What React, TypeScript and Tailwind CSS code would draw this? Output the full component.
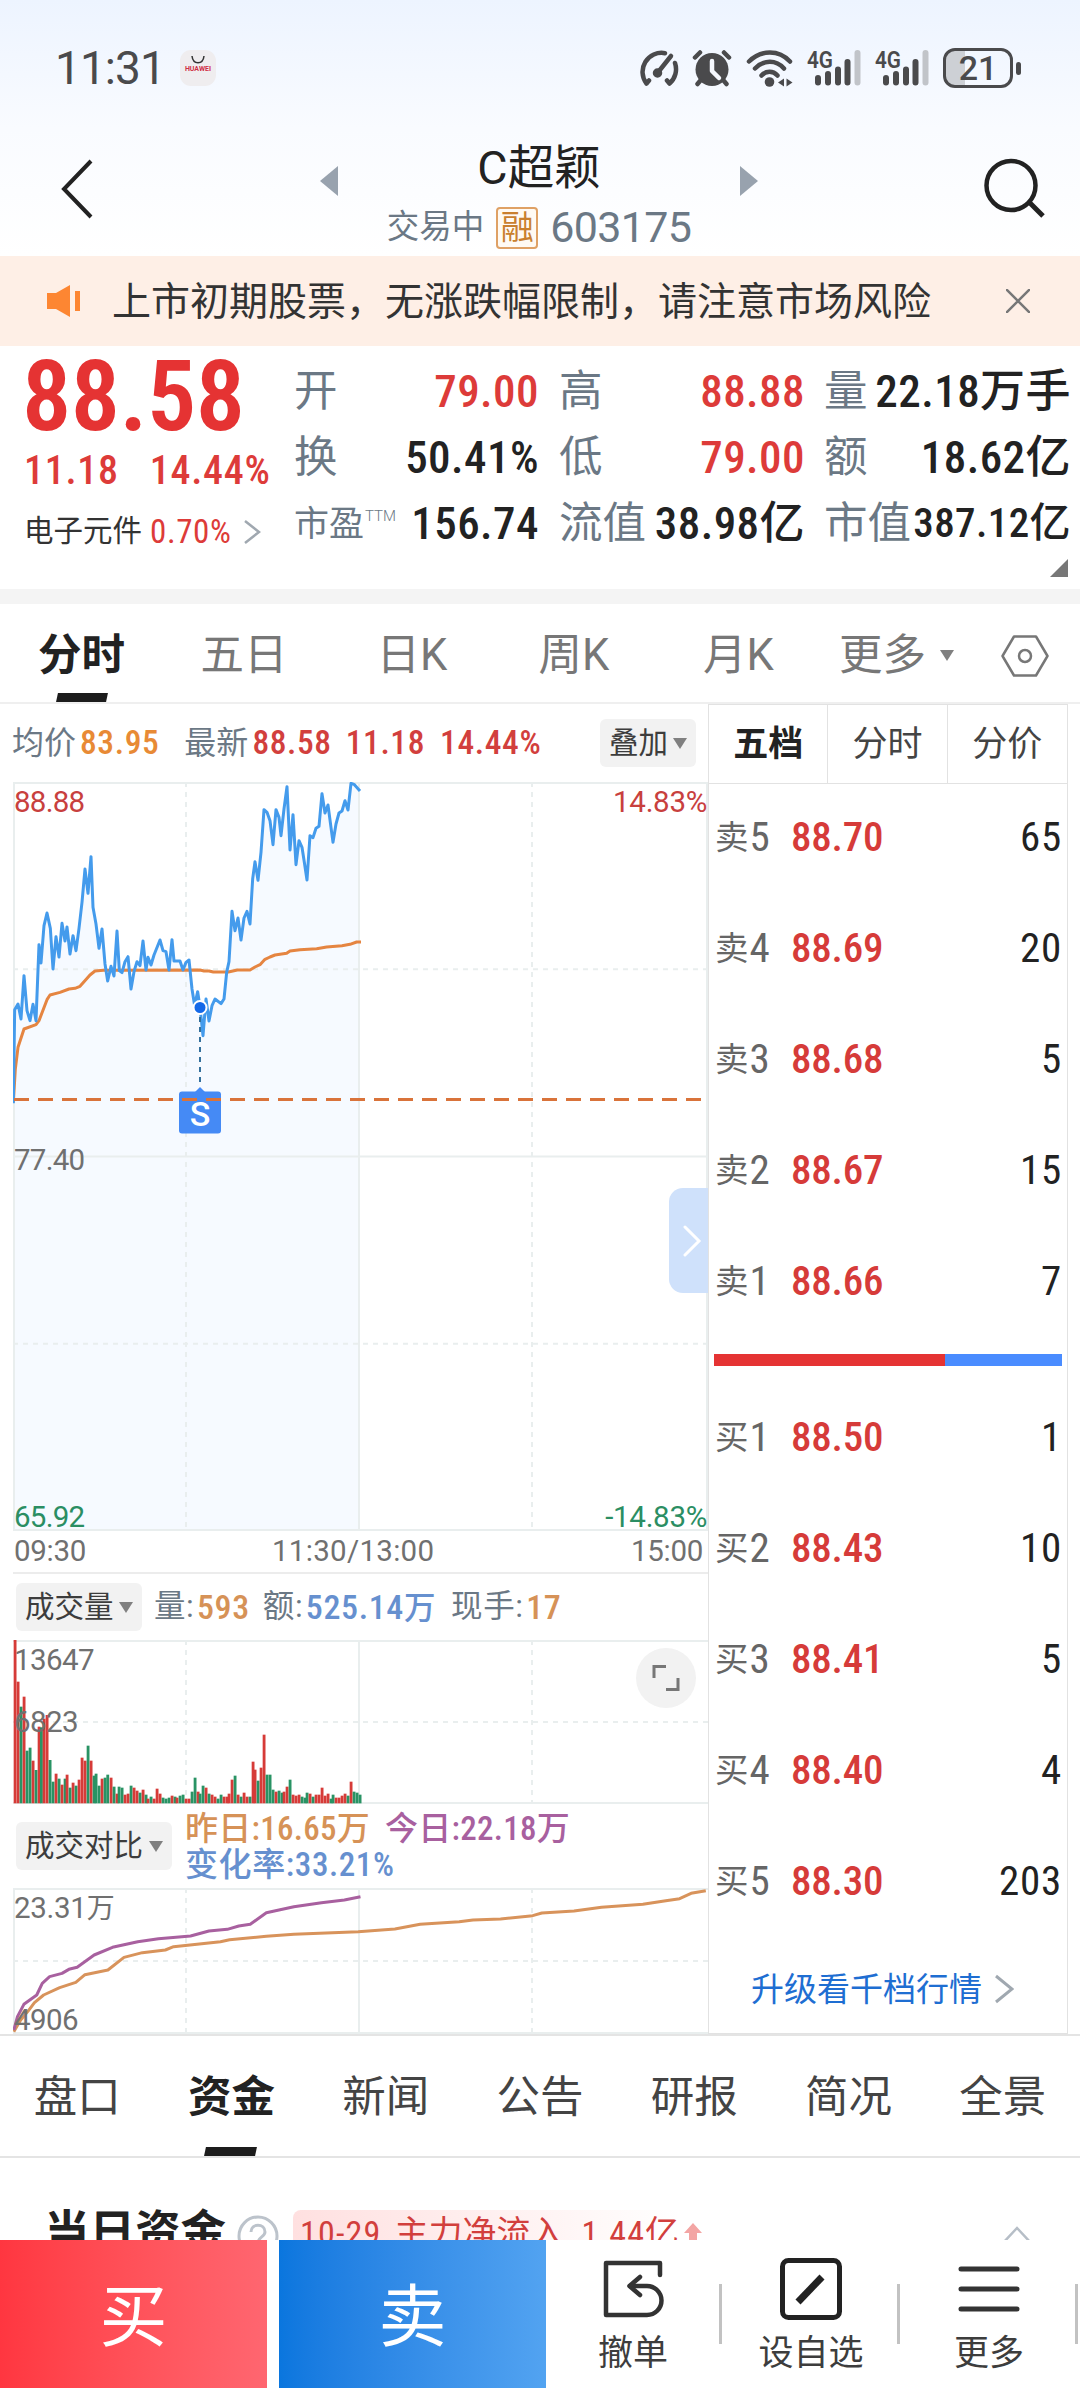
import { type ReactNode } from "react";
import clsx from "clsx";

const QUOTE_COLUMNS = [
  {
    className: "w-[245px] ml-[294px]",
    rows: [
      { label: "开", value: "79.00", up: true },
      { label: "换", value: "50.41%" },
      { label: "市盈", value: "156.74", sup: "TTM" },
    ],
  },
  {
    className: "w-[246px] ml-[20px]",
    rows: [
      { label: "高", value: "88.88", up: true },
      { label: "低", value: "79.00", up: true },
      { label: "流值", value: "38.98亿" },
    ],
  },
  {
    className: "w-[247px] ml-[19px]",
    rows: [
      { label: "量", value: "22.18万手" },
      { label: "额", value: "18.62亿" },
      { label: "市值", value: "387.12亿", small: true },
    ],
  },
];

const SELLS = [
  ["卖5", "88.70", "65"],
  ["卖4", "88.69", "20"],
  ["卖3", "88.68", "5"],
  ["卖2", "88.67", "15"],
  ["卖1", "88.66", "7"],
];

const BUYS = [
  ["买1", "88.50", "1"],
  ["买2", "88.43", "10"],
  ["买3", "88.41", "5"],
  ["买4", "88.40", "4"],
  ["买5", "88.30", "203"],
];

const SECTION_TABS = ["盘口", "资金", "新闻", "公告", "研报", "简况", "全景"];

const PRICE_LINE =
  "40,1003 44,722 54,705 63,750 72,620 81,725 90,755 99,706 108,755 117,527 123,582 132,470 141,432 151,478 159,600 168,503 177,564 186,463 195,516 201,474 210,555 219,500 228,545 237,478 246,400 255,300 264,373 273,263 279,415 288,465 297,538 306,480 315,585 323,636 333,592 342,621 351,486 358,605 366,611 375,578 384,563 393,660 402,608 411,578 420,590 429,516 438,603 444,565 453,588 462,558 480,513 489,545 498,548 507,603 516,512 522,576 540,576 549,603 558,580 567,573 576,660 584,710 593,668 600,714 609,800 618,690 627,756 636,710 645,690 663,704 672,690 680,610 687,578 696,427 705,485 714,447 723,513 732,447 741,427 750,465 758,330 765,278 774,334 783,250 792,122 801,130 810,155 819,227 828,122 837,145 843,200 852,120 861,53 870,243 879,137 888,287 897,215 906,235 913,280 921,333 930,200 939,206 948,178 957,172 966,74 975,132 984,108 999,220 1008,165 1017,132 1026,126 1035,95 1044,123 1053,43 1062,46 1080,66";

const AVG_LINE =
  "40,1000 46,900 54,835 72,780 108,767 117,755 141,692 150,678 180,670 207,660 225,658 240,652 270,618 285,606 310,604 600,603 612,606 627,606 640,609 685,609 712,603 750,603 765,594 780,587 795,571 810,564 825,558 860,553 870,546 900,542 950,539 980,534 1026,530 1050,526 1070,519 1083,519";

const TODAY_LINE =
  "30,1380 38,1340 52,1303 80,1275 92,1240 108,1220 135,1210 150,1198 168,1192 205,1155 245,1132 300,1115 345,1106 415,1098 455,1083 495,1078 520,1068 545,1063 580,1028 640,1010 700,998 750,990 785,980";

const YESTERDAY_LINE =
  "30,1385 45,1350 62,1322 75,1298 95,1275 130,1253 165,1237 185,1214 235,1200 270,1162 310,1148 360,1140 378,1130 480,1115 500,1109 580,1099 640,1093 780,1085 860,1077 915,1063 1000,1055 1030,1050 1090,1047 1160,1037 1180,1029 1250,1023 1310,1012 1400,1003 1450,992 1480,986 1505,970 1537,962";

// [x, top, up]
const VOLUME: [number, number, 0 | 1][] = [
  [45, 60, 1], [54, 185, 1], [63, 260, 0], [72, 230, 1], [81, 392, 0], [90, 383, 0], [99, 422, 1], [108, 450, 0],
  [117, 320, 1], [124, 322, 0], [132, 296, 1], [141, 285, 1], [150, 420, 0], [159, 485, 0], [168, 461, 1], [177, 476, 0],
  [186, 494, 1], [195, 476, 0], [201, 464, 1], [210, 503, 0], [219, 488, 1], [228, 497, 0], [237, 479, 1], [246, 413, 1],
  [255, 422, 1], [264, 377, 0], [273, 422, 1], [282, 467, 0], [288, 461, 0], [297, 497, 0], [306, 476, 1], [315, 473, 0],
  [323, 464, 0], [333, 473, 1], [342, 500, 0], [351, 521, 1], [357, 500, 0], [366, 503, 0], [375, 524, 1], [384, 521, 1],
  [393, 497, 0], [402, 503, 1], [411, 512, 1], [420, 518, 0], [429, 509, 1], [438, 524, 0], [444, 536, 1], [453, 530, 0],
  [462, 536, 1], [471, 506, 1], [480, 521, 1], [489, 533, 0], [498, 536, 0], [507, 533, 0], [516, 527, 1], [525, 530, 0],
  [531, 533, 1], [540, 527, 0], [549, 524, 0], [558, 536, 1], [567, 536, 1], [576, 515, 0], [585, 473, 0], [594, 515, 1],
  [600, 521, 0], [609, 497, 0], [618, 503, 1], [627, 521, 0], [636, 524, 1], [645, 530, 1], [654, 536, 0], [663, 524, 0],
  [672, 530, 1], [681, 530, 1], [687, 521, 1], [696, 479, 1], [705, 467, 0], [714, 524, 1], [723, 530, 0], [732, 518, 1],
  [741, 530, 1], [750, 530, 0], [759, 425, 1], [765, 449, 1], [774, 482, 0], [783, 443, 1], [792, 344, 1], [801, 464, 0],
  [810, 464, 0], [819, 509, 0], [828, 515, 1], [837, 512, 0], [846, 518, 0], [852, 515, 1], [861, 500, 1], [870, 479, 0],
  [879, 524, 1], [888, 527, 1], [897, 524, 1], [906, 530, 0], [915, 533, 0], [921, 518, 0], [930, 521, 1], [939, 530, 0],
  [948, 524, 1], [957, 524, 1], [966, 503, 1], [975, 527, 1], [984, 521, 1], [993, 536, 0], [999, 524, 0], [1008, 533, 1],
  [1017, 533, 1], [1026, 527, 1], [1035, 521, 1], [1044, 527, 0], [1053, 485, 1], [1062, 515, 0], [1071, 518, 0], [1080, 524, 0],
];

function Num({ className, tracking = "tracking-[0.018em]", children }: { className?: string; tracking?: string; children: ReactNode }) {
  return (
    <span className={clsx("font-['Roboto_Condensed','Roboto','Noto_Sans_CJK_SC',sans-serif]", tracking, className)}>
      {children}
    </span>
  );
}

function Caret({ className }: { className?: string }) {
  return (
    <svg width="14" height="11" viewBox="0 0 14 11" className={className}>
      <path d="M0 0h14L7 11z" fill="#808080" />
    </svg>
  );
}

function Signal() {
  return (
    <svg width="54" height="38" viewBox="0 0 54 38" className="overflow-visible">
      <text x="0" y="18.500" fontSize="24" fontWeight="600" fill="#4a4a4c" textLength="26" lengthAdjust="spacingAndGlyphs">4G</text>
      <g stroke="#4a4a4c" strokeWidth="6" strokeLinecap="round">
        <path d="M11 29v4.500M21 25v8.500M31 20.500v13M40.500 13v20.500" />
        <path d="M50.500 4v29.500" stroke="#c1c4c9" />
      </g>
    </svg>
  );
}

function StatusBar() {
  return (
    <div className="flex h-[136px] items-center pl-[55px] pr-[59px] text-[#4a4a4c]">
      <span className="text-[46px] tracking-[-0.02em]">11:31</span>
      <div className="ml-[15px] flex size-9 flex-col items-center rounded-[11px] bg-[#efedef] pt-[6px]">
        <svg width="14" height="8" viewBox="0 0 14 8" fill="none" stroke="#333" strokeWidth="1.500">
          <path d="M1 0c1 9 11 9 12 0" />
        </svg>
        <span className="mt-[2px] text-[7px] font-bold text-[#cf2f45]">HUAWEI</span>
      </div>
      <div className="ml-auto flex items-center">
        <svg width="42" height="38" viewBox="0 0 42 38" fill="none" stroke="#4a4a4c" strokeWidth="4.500" strokeLinecap="round" strokeLinejoin="round">
          <path d="M28 4.200A19 19 0 0 0 9.500 34.500l2.500-3M38 14a19 19 0 0 1-5.500 20.500l-2.500-3" />
          <path d="M20.500 24 34 7" />
          <circle cx="20.500" cy="24" r="2.500" fill="#4a4a4c" />
        </svg>
        <svg width="40" height="38" viewBox="0 0 40 38" className="ml-[13px]" fill="none" stroke="#4a4a4c" strokeWidth="4.500" strokeLinecap="round">
          <circle cx="20" cy="20.500" r="16.500" fill="#4a4a4c" stroke="none" />
          <path d="M3 8.500 8 3.500M32 3.500l5 5M8 32l-2.500 3M32 32l2.500 3" />
          <path d="M20 12v10l7 7" stroke="#f5f8fe" strokeWidth="4.500" strokeLinejoin="round" />
        </svg>
        <svg width="47" height="38" viewBox="0 0 47 38" className="ml-[14px]" fill="none" stroke="#4a4a4c" strokeWidth="4.500" strokeLinecap="round">
          <path d="M3 12.500c12-12 30-12 41 0M9 19.500c9-9 21-9 29 0M15.500 26.500c4.500-5 11.500-5 16 0" />
          <circle cx="23.500" cy="33" r="4.800" fill="#4a4a4c" stroke="none" />
          <path d="M32 33.500l6-4v8zM40.500 37.500v-8l6 4z" fill="#4a4a4c" stroke="none" />
        </svg>
        <div className="ml-[14px] flex gap-[14px]">
          <Signal />
          <Signal />
        </div>
        <div className="ml-[14px] flex h-10 w-[70px] items-center justify-center rounded-[12px] border-[3px] border-[#4a4a4c] bg-linear-to-r from-[#cdd0d5] from-30% to-transparent to-30% text-[34px] font-medium">
          21
        </div>
        <div className="ml-[3px] h-[13px] w-[5px] rounded-full bg-[#4a4a4c]" />
      </div>
    </div>
  );
}

function TitleBar() {
  return (
    <div className="flex h-[120px] items-start justify-between pl-[60px] pr-[34px]">
      <svg width="34" height="60" viewBox="0 0 34 60" className="mt-[23px]" fill="none" stroke="#222" strokeWidth="4">
        <path d="M31 2 4 30l27 28" />
      </svg>
      <div className="flex">
        <svg width="18" height="30" viewBox="0 0 18 30" className="mt-[30px]">
          <path d="M18 0v30L0 15z" fill="#98a2ae" />
        </svg>
        <div className="flex w-[402px] flex-col items-center pt-[9px]">
          <div className="text-[46.500px] text-[#222]">C超颖</div>
          <div className="mt-[14.500px] flex items-center text-[#6b7885]">
            <span className="text-[32.500px]">交易中</span>
            <span className="ml-[12px] flex size-[42px] items-center justify-center rounded-[4px] border-2 border-[#dfa165] bg-[#fffaf3] text-[33px] text-[#c9802f]">
              融
            </span>
            <span className="ml-[12px] text-[43px] tracking-[-0.015em]">603175</span>
          </div>
        </div>
        <svg width="18" height="30" viewBox="0 0 18 30" className="mt-[30px]">
          <path d="M0 0v30l18-15z" fill="#98a2ae" />
        </svg>
      </div>
      <svg width="62" height="60" viewBox="0 0 62 60" className="mt-[22px]" fill="none" stroke="#222" strokeWidth="4.500">
        <circle cx="27" cy="27.500" r="24.500" />
        <path d="M45 44 59 58" strokeWidth="5" />
      </svg>
    </div>
  );
}

function NoticeBar() {
  return (
    <div className="flex h-[90px] items-center bg-[#feefe6] pl-[47px] pr-[50px]">
      <svg width="34" height="32" viewBox="0 0 34 32" fill="#fd8632">
        <path d="M0 8h9L23 0v32L9 24H0z" />
        <path d="M28 6h5v20h-5z" />
      </svg>
      <span className="mt-[2px] ml-[31px] text-[39px] text-[#333]">上市初期股票，无涨跌幅限制，请注意市场风险</span>
      <svg width="24" height="24" viewBox="0 0 24 24" className="ml-auto" stroke="#777" strokeWidth="2.500">
        <path d="M0 0 24 24M24 0 0 24" />
      </svg>
    </div>
  );
}

function QuotePanel() {
  return (
    <div className="relative h-[243px]">
      <div className="absolute top-0 left-[24px] text-[#e53333]">
        <Num tracking="tracking-[-0.005em]" className="-ml-[2px] mt-[2px] block text-[98px] leading-[98px] font-semibold">88.58</Num>
        <div className="mt-[5px] flex gap-[31px] text-[40px] font-medium text-[#dd3b39]">
          <Num>11.18</Num>
          <Num>14.44%</Num>
        </div>
        <div className="mt-[24px] flex items-center text-[29.500px]">
          <span className="text-[#333]">电子元件</span>
          <Num className="ml-[8px] text-[33px] text-[#dd3b39]">0.70%</Num>
          <svg width="18" height="26" viewBox="0 0 18 26" className="ml-[12px]" fill="none" stroke="#a0a8b0" strokeWidth="2.500">
            <path d="M2 2 16 13 2 24" />
          </svg>
        </div>
      </div>
      <div className="flex pt-[12px]">
        {QUOTE_COLUMNS.map((col, i) => (
          <div key={i} className={clsx("shrink-0", col.className)}>
            {col.rows.map((row) => (
              <div key={row.label} className="flex h-[66px] items-center justify-between whitespace-nowrap">
                <span className={clsx("mt-[2px] flex text-[#6b7885]", row.sup ? "text-[35px]" : "text-[43.500px]")}>
                  {row.label}
                  {row.sup && <sup className="top-0 mt-[9px] ml-[1px] text-[15px] font-light">{row.sup}</sup>}
                </span>
                <Num
                  tracking="tracking-[0.01em]"
                  className={clsx(
                    "font-medium",
                    row.small ? "text-[41px]" : "text-[45px]",
                    row.up ? "text-[#dd3b39]" : "text-[#222]",
                  )}
                >
                  {row.value}
                </Num>
              </div>
            ))}
          </div>
        ))}
      </div>
      <svg width="18" height="18" viewBox="0 0 18 18" className="absolute right-[12px] bottom-[12px]">
        <path d="M18 0v18H0z" fill="#777" />
      </svg>
    </div>
  );
}

function PeriodTabs() {
  return (
    <div className="relative flex h-[100px] items-center border-b-2 border-[#efefef] pt-[5px] text-[43.500px] text-[#777]">
      <span className="w-[163px] text-center font-bold text-[#222]">分时</span>
      <span className="w-[162px] text-center">五日</span>
      <span className="w-[174px] text-center">日K</span>
      <span className="w-[150px] text-center">周K</span>
      <span className="w-[179px] text-center">月K</span>
      <span className="ml-[11px]">更多</span>
      <Caret className="ml-[14px]" />
      <svg width="48" height="42" viewBox="0 0 48 42" className="ml-[47px]" fill="none" stroke="#777" strokeWidth="2.500">
        <path d="M13 1.500h22L46.500 21 35 40.500H13L1.500 21z" strokeLinejoin="round" />
        <circle cx="24" cy="21" r="6" />
      </svg>
      <div className="absolute bottom-0 left-[57px] h-[9px] w-[50px] -skew-x-12 bg-[#1c1c1c]" />
    </div>
  );
}

function GridLines({ height, left = true, solidMid = false }: { height: number; left?: boolean; solidMid?: boolean }) {
  return (
    <g stroke="#e9eeee" strokeWidth="2" fill="none">
      <path d={`M0 1H695M0 ${height - 1}H695M346 0V${height}`} />
      {left && <path d={`M1 0V${height}`} />}
      <path d={`M173 0V${height}M519 0V${height}`} strokeDasharray="5 5" />
      {solidMid ? (
        <>
          <path d={`M0 ${height / 2}H695M694 0V${height}`} />
          <path d={`M0 ${height / 4}H695M0 ${(height * 3) / 4}H695`} strokeDasharray="5 5" />
        </>
      ) : (
        <path d={`M0 ${height / 2}H695`} strokeDasharray="5 5" />
      )}
    </g>
  );
}

function PriceChart() {
  return (
    <div className="relative ml-[13px] h-[749px] w-[695px] text-[29.500px]">
      <svg width="695" height="749" viewBox="0 0 695 749" className="block">
        <g transform="translate(-13 -13) scale(0.33333)">
          <polygon points={`40,2284 ${PRICE_LINE} 1080,2284`} fill="#f6faff" />
        </g>
        <GridLines height={749} solidMid />
        <g transform="translate(-13 -13) scale(0.33333)" fill="none" strokeLinejoin="round">
          <polyline points={AVG_LINE} stroke="#e58541" strokeWidth="9" />
          <polyline points={PRICE_LINE} stroke="#449bec" strokeWidth="9" />
        </g>
        <rect x="166" y="309.500" width="42" height="42" rx="3" fill="#458af5" />
        <path d="M182 310l5-5 5 5z" fill="#458af5" />
        <path d="M1 317.500H688" stroke="#d9733a" strokeWidth="3" strokeDasharray="15 9" />
        <path d="M187 235V300" stroke="#33709c" strokeWidth="2" strokeDasharray="5 5" />
        <circle cx="187" cy="225.500" r="6.500" fill="#1469e8" stroke="#fff" strokeWidth="2" />
      </svg>
      <span className="absolute top-[315px] left-[166px] w-[42px] text-center text-[34px] font-medium text-white">S</span>
      <span className="absolute top-[6px] left-px tracking-[-0.025em] text-[#c8403e]">88.88</span>
      <span className="absolute top-[6px] right-px tracking-[-0.01em] text-[#c8403e]">14.83%</span>
      <span className="absolute top-[364px] left-px tracking-[-0.025em] text-[#707070]">77.40</span>
      <span className="absolute -bottom-px left-px tracking-[-0.025em] text-[#2b8e63]">65.92</span>
      <span className="absolute right-px -bottom-px tracking-[-0.01em] text-[#2b8e63]">-14.83%</span>
      <button className="absolute top-[406px] right-0 flex h-[105px] w-[39px] items-center justify-center rounded-l-[14px] bg-[#cfe1fb]">
        <svg width="20" height="32" viewBox="0 0 20 32" className="ml-[6px]" fill="none" stroke="#fff" strokeWidth="3" strokeLinecap="round">
          <path d="M3 2 17 16 3 30" />
        </svg>
      </button>
    </div>
  );
}

function PickerButton({ children, className }: { children: string; className?: string }) {
  return (
    <button className={clsx("flex h-[48px] shrink-0 items-center justify-between rounded-[6px] bg-[#f2f2f2] pt-px pl-[9px] pr-[9px] text-[29.500px] text-[#3d3d3d]", className)}>
      {children}
      <Caret />
    </button>
  );
}

function Charts() {
  return (
    <div className="w-[708px]">
      <div className="flex h-[78px] items-center whitespace-nowrap pl-[12px] pr-[12px] text-[32px] text-[#6b7885]">
        <span>均价</span>
        <Num className="ml-[4px] text-[33.500px] font-medium text-[#e88a35]">83.95</Num>
        <span className="ml-[25px]">最新</span>
        <Num className="ml-[4px] text-[33.500px] font-medium text-[#d23f3d]">88.58</Num>
        <Num className="ml-[14px] text-[33.500px] font-medium text-[#d23f3d]">11.18</Num>
        <Num className="ml-[15px] text-[33.500px] font-medium text-[#d23f3d]">14.44%</Num>
        <PickerButton className="ml-auto w-[96px]">叠加</PickerButton>
      </div>
      <PriceChart />
      <div className="relative ml-[13px] flex h-[43px] w-[695px] items-center justify-between border-b-2 border-[#ececec] pr-[5px] pl-px text-[29.500px] text-[#707070]">
        <span className="tracking-[-0.01em]">09:30</span>
        <span className="absolute left-[259px] tracking-[0.01em]">11:30/13:00</span>
        <span className="tracking-[-0.01em]">15:00</span>
      </div>

      <div className="flex h-[66px] items-center whitespace-nowrap pl-[16px] text-[31.500px] text-[#6b7885]">
        <PickerButton className="w-[126px]">成交量</PickerButton>
        <Num className="ml-[12px]">量:</Num>
        <Num className="ml-[3px] text-[34px] font-medium text-[#d69257]">593</Num>
        <Num className="ml-[13px]">额:</Num>
        <Num className="ml-[3px] text-[34px] font-medium text-[#6690cf]">525.14<span className="text-[31.500px]">万</span></Num>
        <Num className="ml-[15px]">现手:</Num>
        <Num className="ml-[3px] text-[34px] font-medium text-[#d69257]">17</Num>
      </div>
      <div className="relative ml-[13px] h-[164px] text-[29.500px] text-[#707070]">
        <svg width="695" height="164" viewBox="0 0 695 164" className="block">
          <GridLines height={164} left={false} />
          <g transform="translate(-13 -20) scale(0.33333)">
            {VOLUME.map(([x, top, up]) => (
              <rect key={x} x={x - 4} y={top} width="8.500" height={550 - top} fill={up ? "#d63b38" : "#299364"} />
            ))}
          </g>
        </svg>
        <span className="absolute top-[6px] left-px tracking-[-0.02em]">13647</span>
        <span className="absolute top-[68px] left-px tracking-[-0.02em]">6823</span>
        <button className="absolute top-[8px] right-[12px] flex size-[60px] items-center justify-center rounded-full bg-[#f2f2f2]">
          <svg width="28" height="28" viewBox="0 0 28 28" fill="none" stroke="#777" strokeWidth="3">
            <path d="M2 14V2.500h12M26 14v11.500H14" />
          </svg>
        </button>
      </div>

      <div className="flex h-[84px] items-center whitespace-nowrap pl-[16px] font-medium">
        <PickerButton className="w-[156px] font-normal">成交对比</PickerButton>
        <div className="mt-[2px] ml-[13px] text-[33px] leading-[36px]">
          <div className="flex gap-[15px]">
            <Num tracking="tracking-[0.008em]" className="text-[#d69257]">昨日:16.65万</Num>
            <Num tracking="tracking-[0.008em]" className="text-[#a8609f]">今日:22.18万</Num>
          </div>
          <Num className="block text-[#6690cf]">变化率:33.21%</Num>
        </div>
      </div>
      <div className="relative ml-[13px] h-[146px] text-[29.500px] text-[#707070]">
        <svg width="695" height="146" viewBox="0 0 695 146" className="block">
          <GridLines height={146} />
          <g transform="translate(-13 -318) scale(0.4592 0.33333)" fill="none" strokeWidth="3" strokeLinejoin="round">
            <polyline points={YESTERDAY_LINE} stroke="#d8935b" vectorEffect="non-scaling-stroke" />
            <polyline points={TODAY_LINE} stroke="#a8609f" vectorEffect="non-scaling-stroke" />
          </g>
        </svg>
        <span className="absolute top-[6px] left-px tracking-[-0.01em]">23.31<span className="text-[28px]">万</span></span>
        <span className="absolute -bottom-px left-px tracking-[-0.02em]">4906</span>
      </div>
    </div>
  );
}

function BookRow({ row: [label, price, qty] }: { row: string[] }) {
  return (
    <div className="flex h-[111px] items-center pr-[5px] pl-[6px] text-[41px]">
      <span className="flex w-[76px] items-center text-[#666]">
        <span className="text-[33.500px]">{label[0]}</span>
        <Num className="ml-px">{label[1]}</Num>
      </span>
      <Num tracking="tracking-[-0.005em]" className="font-medium text-[#d63b39]">{price}</Num>
      <Num className="ml-auto text-[#222]">{qty}</Num>
    </div>
  );
}

function OrderBook() {
  return (
    <div className="flex w-[360px] flex-col border border-[#e2e2e2]">
      <div className="grid h-[79px] grid-cols-3 divide-x divide-[#e2e2e2] border-b border-[#e2e2e2] text-[35px] leading-[79px] text-[#444]">
        <span className="text-center font-bold text-[#222]">五档</span>
        <span className="text-center">分时</span>
        <span className="text-center">分价</span>
      </div>
      <div className="-mt-[2px]">
        {SELLS.map((row) => (
          <BookRow key={row[0]} row={row} />
        ))}
      </div>
      <div className="mx-[5px] mt-[17px] flex h-[12px]">
        <div className="w-[231px] bg-[#e53333]" />
        <div className="flex-1 bg-[#4a8cff]" />
      </div>
      <div className="mt-[16px]">
        {BUYS.map((row) => (
          <BookRow key={row[0]} row={row} />
        ))}
      </div>
      <div className="flex flex-1 items-center pt-[8px] pl-[42px] text-[33px] text-[#1e6ed2]">
        升级看千档行情
        <svg width="20" height="30" viewBox="0 0 20 30" className="ml-[12px]" fill="none" stroke="#a0a8b0" strokeWidth="3">
          <path d="M2 2 18 15 2 28" />
        </svg>
      </div>
    </div>
  );
}

function SectionTabs() {
  return (
    <div className="grid h-[124px] grid-cols-7 border-y-2 border-[#e4e4e4] text-[43.500px] leading-[124px] text-[#444]">
      {SECTION_TABS.map((tab) => {
        const active = tab === "资金";
        return (
          <div key={tab} className={clsx("relative h-[120px] text-center", active && "font-bold text-[#222]")}>
            {tab}
            {active && <div className="absolute bottom-0 left-[51px] h-[9px] w-[51px] -skew-x-12 bg-[#1c1c1c]" />}
          </div>
        );
      })}
    </div>
  );
}

function FundsHeader() {
  return (
    <div className="flex h-[82px] items-start overflow-hidden pl-[44px] pr-[48px]">
      <span className="mt-[52px] text-[45.500px] font-bold text-[#222]">当日资金</span>
      <svg width="42" height="42" viewBox="0 0 42 42" className="mt-[57px] ml-[11px] shrink-0" fill="none" stroke="#bcc3cb" strokeWidth="3">
        <circle cx="21" cy="21" r="19" />
        <path d="M14 17c0-9 14-9 14 0 0 5-7 5-7 11" />
      </svg>
      <div className="mt-[52px] ml-[14px] h-[50px] w-[386px] rounded-[8px] bg-linear-to-r from-[#ffe0e0] to-white pt-[6px] pl-[7px] text-[34px] whitespace-nowrap text-[#d23f3d]">
        <Num tracking="tracking-[0.035em]">10-29</Num>
        <span className="ml-[13px]">主力净流入</span>
        <Num tracking="tracking-[0.03em]" className="ml-[17px]">1.44亿</Num>
      </div>
      <svg width="18" height="30" viewBox="0 0 18 30" className="mt-[65px] ml-[5px]">
        <path d="M9 0l9 10h-5v20H5V10H0z" fill="#f3a5a4" />
      </svg>
      <svg width="30" height="18" viewBox="0 0 30 18" className="mt-[68px] ml-auto" fill="none" stroke="#b6bec7" strokeWidth="2.500">
        <path d="M1 17 15 2l14 15" />
      </svg>
    </div>
  );
}

function ActionItem({ icon, label }: { icon: ReactNode; label: string }) {
  return (
    <div className="relative flex w-[178px] flex-col items-center pt-[18px] text-[35px] text-[#3d3d3d]">
      <div className="flex h-[62px] items-center">{icon}</div>
      <span className="mt-[16px]">{label}</span>
      <div className="absolute top-[44px] right-0 h-[60px] w-[3px] bg-[#c2c2c2]" />
    </div>
  );
}

function ActionBar() {
  return (
    <div className="flex h-[148px] bg-white">
      <button className="w-[267px] bg-linear-to-r from-[#ff3640] to-[#ff6670] pt-[8px] text-[68px] text-white">买</button>
      <button className="mr-[-2px] ml-[12px] w-[267px] bg-linear-to-r from-[#0a76de] to-[#52a3f1] pt-[8px] text-[68px] text-white">卖</button>
      <ActionItem
        label="撤单"
        icon={
          <svg width="62" height="60" viewBox="0 0 62 60" fill="none" stroke="#333" strokeWidth="4.500" strokeLinecap="round" strokeLinejoin="round">
            <path d="M58 16V4H4v52h41a14.500 14.500 0 0 0 0-29H28" />
            <path d="M38 18l-10.500 9L38 36" />
          </svg>
        }
      />
      <ActionItem
        label="设自选"
        icon={
          <svg width="62" height="62" viewBox="0 0 62 62" fill="none" stroke="#222">
            <rect x="2.500" y="2.500" width="57" height="57" rx="6" strokeWidth="5" />
            <path d="M18 44 42 19" strokeWidth="7" />
          </svg>
        }
      />
      <ActionItem
        label="更多"
        icon={
          <svg width="62" height="46" viewBox="0 0 62 46" stroke="#333" strokeWidth="5" strokeLinecap="round">
            <path d="M3 3h56M3 23h56M3 43h56" />
          </svg>
        }
      />
    </div>
  );
}

export default function App() {
  return (
    <div className="flex h-[2388px] w-[1080px] flex-col overflow-hidden bg-white font-['Roboto','Noto_Sans_CJK_SC',sans-serif] leading-none">
      <div className="bg-linear-to-b from-[#edf4ff] via-[#f9fbff] to-white">
        <StatusBar />
        <TitleBar />
      </div>
      <NoticeBar />
      <QuotePanel />
      <div className="h-[15px] bg-[#f4f4f4]" />
      <PeriodTabs />
      <div className="flex h-[1330px]">
        <Charts />
        <OrderBook />
      </div>
      <SectionTabs />
      <FundsHeader />
      <ActionBar />
    </div>
  );
}
